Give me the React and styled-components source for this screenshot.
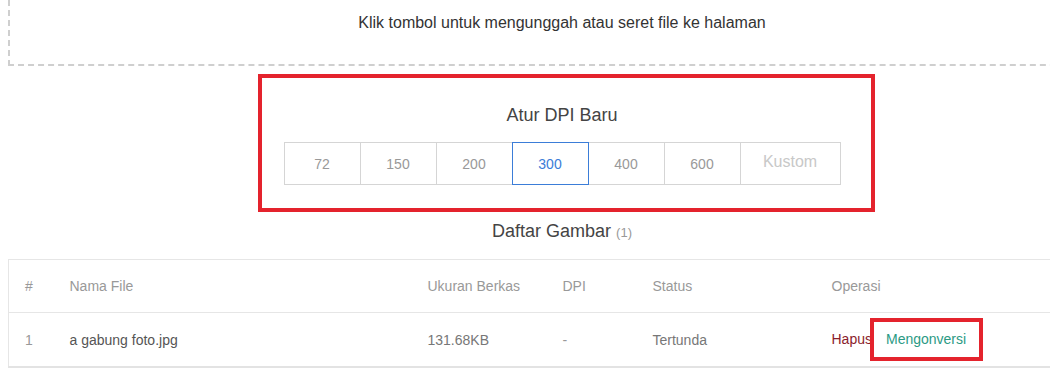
import React, { useState } from 'react';
import styled, { createGlobalStyle } from 'styled-components';

const GlobalStyle = createGlobalStyle`
  html, body {
    margin: 0;
    padding: 0;
    overflow: hidden;
    background: #ffffff;
    font-family: "Liberation Sans", Arial, sans-serif;
  }
`;

// the real page is wider than the window; its middle sits at x=562
const Page = styled.div`
  width: 1108px;
  margin-left: 8px;
  display: flex;
  flex-direction: column;
`;

const DropZone = styled.div`
  height: 66px;
  border: 2px dashed #cfcfcf;
  border-top: none;
  display: flex;
  justify-content: center;
  padding-top: 14px;
  box-sizing: border-box;
  color: #333333;
  font-size: 16px;
  line-height: 18px;
`;

const DpiPanel = styled.section`
  width: 617px;
  box-sizing: border-box;
  margin: 8px 0 0 250px;
  border: 4px solid #e4232d;
  padding: 27px 31px 23px 22px;
  display: flex;
  flex-direction: column;
  align-items: center;
  gap: 16px;
`;

const PanelTitle = styled.h3`
  margin: 0;
  font-size: 18px;
  line-height: 21px;
  font-weight: 400;
  color: #444444;
`;

const DpiGroup = styled.div`
  display: flex;
  align-items: stretch;
`;

const DpiButton = styled.button`
  width: 77px;
  height: 43px;
  margin-left: -1px;
  padding: 0;
  background: #ffffff;
  border: 1px solid ${p => (p.$active ? '#3b7dd8' : '#d5d5d5')};
  position: relative;
  z-index: ${p => (p.$active ? 1 : 0)};
  color: ${p => (p.$active ? '#3b7dd8' : '#999999')};
  font-family: "Liberation Sans", Arial, sans-serif;
  font-size: 14px;
  cursor: pointer;

  &:first-child {
    margin-left: 0;
  }
`;

const CustomInput = styled.input`
  width: 101px;
  height: 43px;
  margin-left: -1px;
  box-sizing: border-box;
  border: 1px solid #d5d5d5;
  padding: 0 0 4px;
  text-align: center;
  font-family: "Liberation Sans", Arial, sans-serif;
  font-size: 16px;
  color: #666666;
  outline: none;

  &::placeholder {
    color: #c8c8c8;
  }
`;

const ListTitle = styled.h3`
  margin: 9px 0 0;
  text-align: center;
  font-size: 18px;
  line-height: 21px;
  font-weight: 400;
  color: #444444;
`;

const Count = styled.span`
  font-size: 13px;
  color: #999999;
`;

const Table = styled.table`
  margin-top: 16px;
  width: 1108px;
  border-collapse: collapse;
  border: 1px solid #e6e6e6;
  border-bottom: 2px solid #e3e3e3;
  table-layout: fixed;
  font-size: 14px;
`;

const Th = styled.th`
  box-sizing: border-box;
  width: ${p => p.$w}px;
  height: 53px;
  padding: 0 0 0 16px;
  text-align: left;
  font-weight: 400;
  color: #999999;
  border-bottom: 1px solid #e6e6e6;
`;

const Td = styled.td`
  height: 53px;
  padding: 0 0 0 16px;
  color: ${p => p.$color || '#777777'};
`;

const DeleteLink = styled.span`
  color: #8b1d2c;
  cursor: pointer;
`;

const ConvertLink = styled.span`
  display: inline-block;
  margin-left: -2px;
  border: 4px solid #e4232d;
  padding: 9px 13px 10px 12px;
  color: #2b9a84;
  cursor: pointer;
`;

const dpiValues = [72, 150, 200, 300, 400, 600];

const columns = [
  { label: '#', w: 45 },
  { label: 'Nama File', w: 358 },
  { label: 'Ukuran Berkas', w: 135 },
  { label: 'DPI', w: 90 },
  { label: 'Status', w: 179 },
  { label: 'Operasi', w: 301 },
];

export default function App() {
  const [dpi, setDpi] = useState(300);

  return (
    <>
      <GlobalStyle />
      <Page>
        <DropZone>Klik tombol untuk mengunggah atau seret file ke halaman</DropZone>

        <DpiPanel>
          <PanelTitle>Atur DPI Baru</PanelTitle>
          <DpiGroup>
            {dpiValues.map(v => (
              <DpiButton key={v} $active={dpi === v} onClick={() => setDpi(v)}>
                {v}
              </DpiButton>
            ))}
            <CustomInput placeholder="Kustom" />
          </DpiGroup>
        </DpiPanel>

        <ListTitle>
          Daftar Gambar <Count>(1)</Count>
        </ListTitle>

        <Table>
          <thead>
            <tr>
              {columns.map(c => (
                <Th key={c.label} $w={c.w}>{c.label}</Th>
              ))}
            </tr>
          </thead>
          <tbody>
            <tr>
              <Td $color="#999999">1</Td>
              <Td $color="#555555">a gabung foto.jpg</Td>
              <Td>131.68KB</Td>
              <Td $color="#999999">-</Td>
              <Td>Tertunda</Td>
              <Td>
                <DeleteLink>Hapus</DeleteLink>
                <ConvertLink>Mengonversi</ConvertLink>
              </Td>
            </tr>
          </tbody>
        </Table>
      </Page>
    </>
  );
}
